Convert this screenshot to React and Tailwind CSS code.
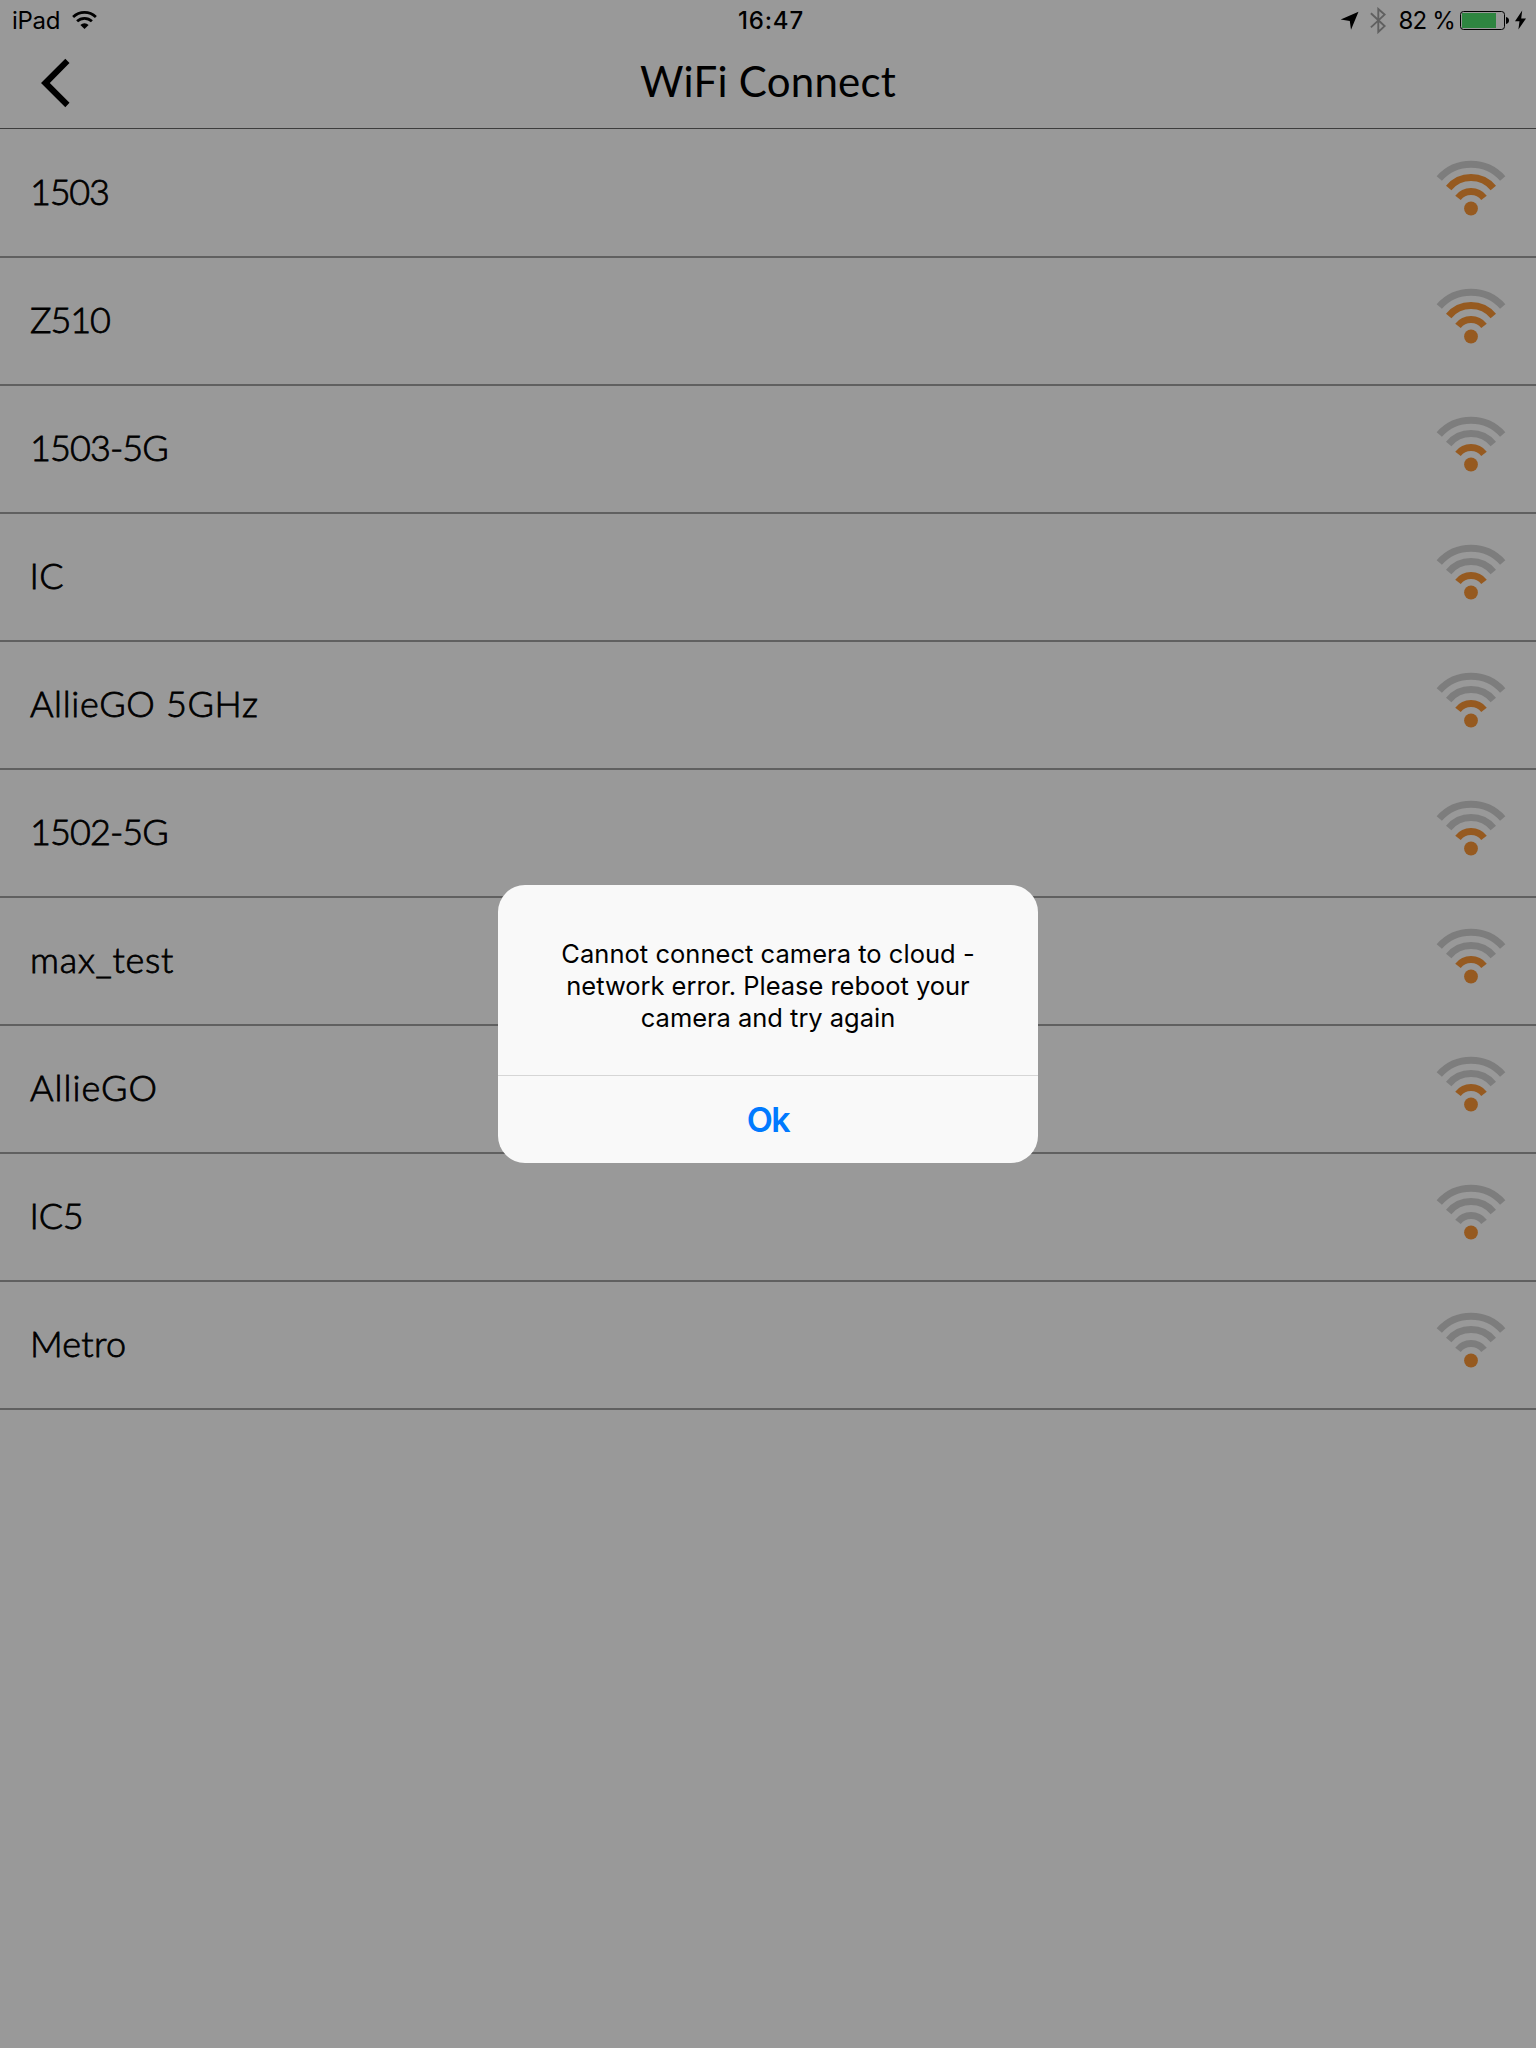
const networks = [
  { name: '1503', bars: 3, fit: 'tracking-[-1.2px] pl-[30px]' },
  { name: 'Z510', bars: 3, fit: 'tracking-[-1.1px] pl-[30px]' },
  { name: '1503-5G', bars: 2, fit: 'tracking-[-0.9px] pl-[30px]' },
  { name: 'IC', bars: 2, fit: 'tracking-[0.4px] pl-[29.5px]' },
  { name: 'AllieGO 5GHz', bars: 2, fit: 'tracking-[0.65px] pl-[30px]' },
  { name: '1502-5G', bars: 2, fit: 'tracking-[-0.9px] pl-[30px]' },
  { name: 'max_test', bars: 2, fit: 'tracking-[0.75px] pl-[30px]' },
  { name: 'AllieGO', bars: 2, fit: 'tracking-[1px] pl-[30px]' },
  { name: 'IC5', bars: 1, fit: 'tracking-[-0.2px] pl-[29.5px]' },
  { name: 'Metro', bars: 1, fit: 'tracking-[0.25px] pl-[30px]' },
];

const sans = 'font-[Inter,"Liberation_Sans",sans-serif]';

function Signal({ bars }) {
  const tone = (n) => (bars >= n ? '#965a20' : '#7d7d7d');
  return (
    <svg className="mt-[30px] h-[56px] w-[70px] shrink-0" viewBox="0 0 70 56" fill="none" strokeWidth="7">
      <path d="M3.3 18.5A42.5 42.5 0 0 1 66.7 18.5" stroke={tone(4)} />
      <path d="M12.7 28A29 29 0 0 1 57.3 28" stroke={tone(3)} />
      <path d="M22 37.8A16.5 16.5 0 0 1 48 37.8" stroke={tone(2)} />
      <circle cx="35" cy="48.5" r="6.9" fill={tone(1)} />
    </svg>
  );
}

function StatusBar() {
  return (
    <div className={`${sans} grid h-10 grid-cols-3 text-[24px] leading-[41px] text-black`}>
      <div className="flex pl-[12px]">
        <span className="w-[60px] whitespace-nowrap tracking-[-0.3px]">iPad</span>
        <svg className="mt-[10px] h-[20px] w-[25px]" viewBox="0 0 25 20" fill="none" stroke="#000" strokeWidth="2.7">
          <path d="M1.1 7A16.2 16.2 0 0 1 23.9 7" />
          <path d="M5.1 11.3A10.6 10.6 0 0 1 19.9 11.3" />
          <path d="M8.4 14.9A5.9 5.9 0 0 1 16.6 14.9L12.5 19Z" fill="#000" stroke="none" />
        </svg>
      </div>
      <div className="pl-[6px] text-center font-medium tracking-[0.8px]">16:47</div>
      <div className="flex justify-end pr-[9px]">
        <svg className="mt-[11px] mr-[11px] h-[20px] w-[19px]" viewBox="0 0 19 20">
          <path d="M18.5 .7L11 18.8L9.8 10L.7 8.6Z" />
        </svg>
        <svg className="mt-[7px] mr-[13px] h-[27px] w-[16px]" viewBox="0 0 16 27" fill="none" stroke="#606060" strokeWidth="1.9">
          <path d="M.9 6.3L14.6 19.1L8.3 25V2L14.6 7.6L.9 20.4" />
        </svg>
        <span className="w-[60.5px] whitespace-nowrap tracking-[-0.8px]">82 %</span>
        <svg className="mt-[10px] h-[20px] w-[68px]" viewBox="0 0 68 20">
          <rect x="1.5" y="1.5" width="44" height="18" rx="3" fill="none" stroke="#000" />
          <rect x="3" y="3" width="34" height="15" fill="#2e8540" />
          <path d="M47 7Q50 7.8 50 10.5T47 14Z" />
          <path d="M63.2 .5L56 11.2H60.5L59.4 19.5L67 8.6H62.2Z" />
        </svg>
      </div>
    </div>
  );
}

function Header() {
  return (
    <header className="mb-px h-[129px] border-b border-[#3d3d3d]">
      <StatusBar />
      <div className="grid h-[84px] grid-cols-3">
        <svg className="mt-[18px] ml-[41px] h-[50px] w-[29px]" viewBox="0 0 29 50">
          <path d="M0 25L24.3 .8L28.5 5.1L8.8 25L28.5 44.8L24.3 49.2Z" />
        </svg>
        <h1 className="text-center text-[42px] leading-[82px] tracking-[0.25px]">WiFi Connect</h1>
      </div>
    </header>
  );
}

function Alert() {
  return (
    <div className={`${sans} absolute top-[885px] left-[498px] flex h-[278px] w-[540px] flex-col rounded-[27px] bg-[#f9f9f9] text-center`}>
      <div className="h-[191px] border-b border-[#d6d6d6] pt-[53px] text-[25.5px] leading-8 whitespace-nowrap">
        <p className="tracking-[0.03px]">Cannot connect camera to cloud -</p>
        <p className="tracking-[-0.03px]">network error. Please reboot your</p>
        <p className="tracking-[-0.03px]">camera and try again</p>
      </div>
      <button className="h-[87px] text-[34px] leading-[88px] font-semibold tracking-[-1.4px] text-[#007aff]">Ok</button>
    </div>
  );
}

export default function App() {
  return (
    <main className="relative h-[2048px] w-[1536px] overflow-hidden bg-[#999] font-[Lato,sans-serif] text-black">
      <Header />
      <ul>
        {networks.map(({ name, bars, fit }) => (
          <li key={name} className="flex h-32 justify-between border-b-2 border-[#606060] pr-[30px]">
            <span className={`${fit} text-[36px] leading-[123px] font-light whitespace-nowrap [-webkit-text-stroke:0.8px_#000]`}>{name}</span>
            <Signal bars={bars} />
          </li>
        ))}
      </ul>
      <Alert />
    </main>
  );
}
